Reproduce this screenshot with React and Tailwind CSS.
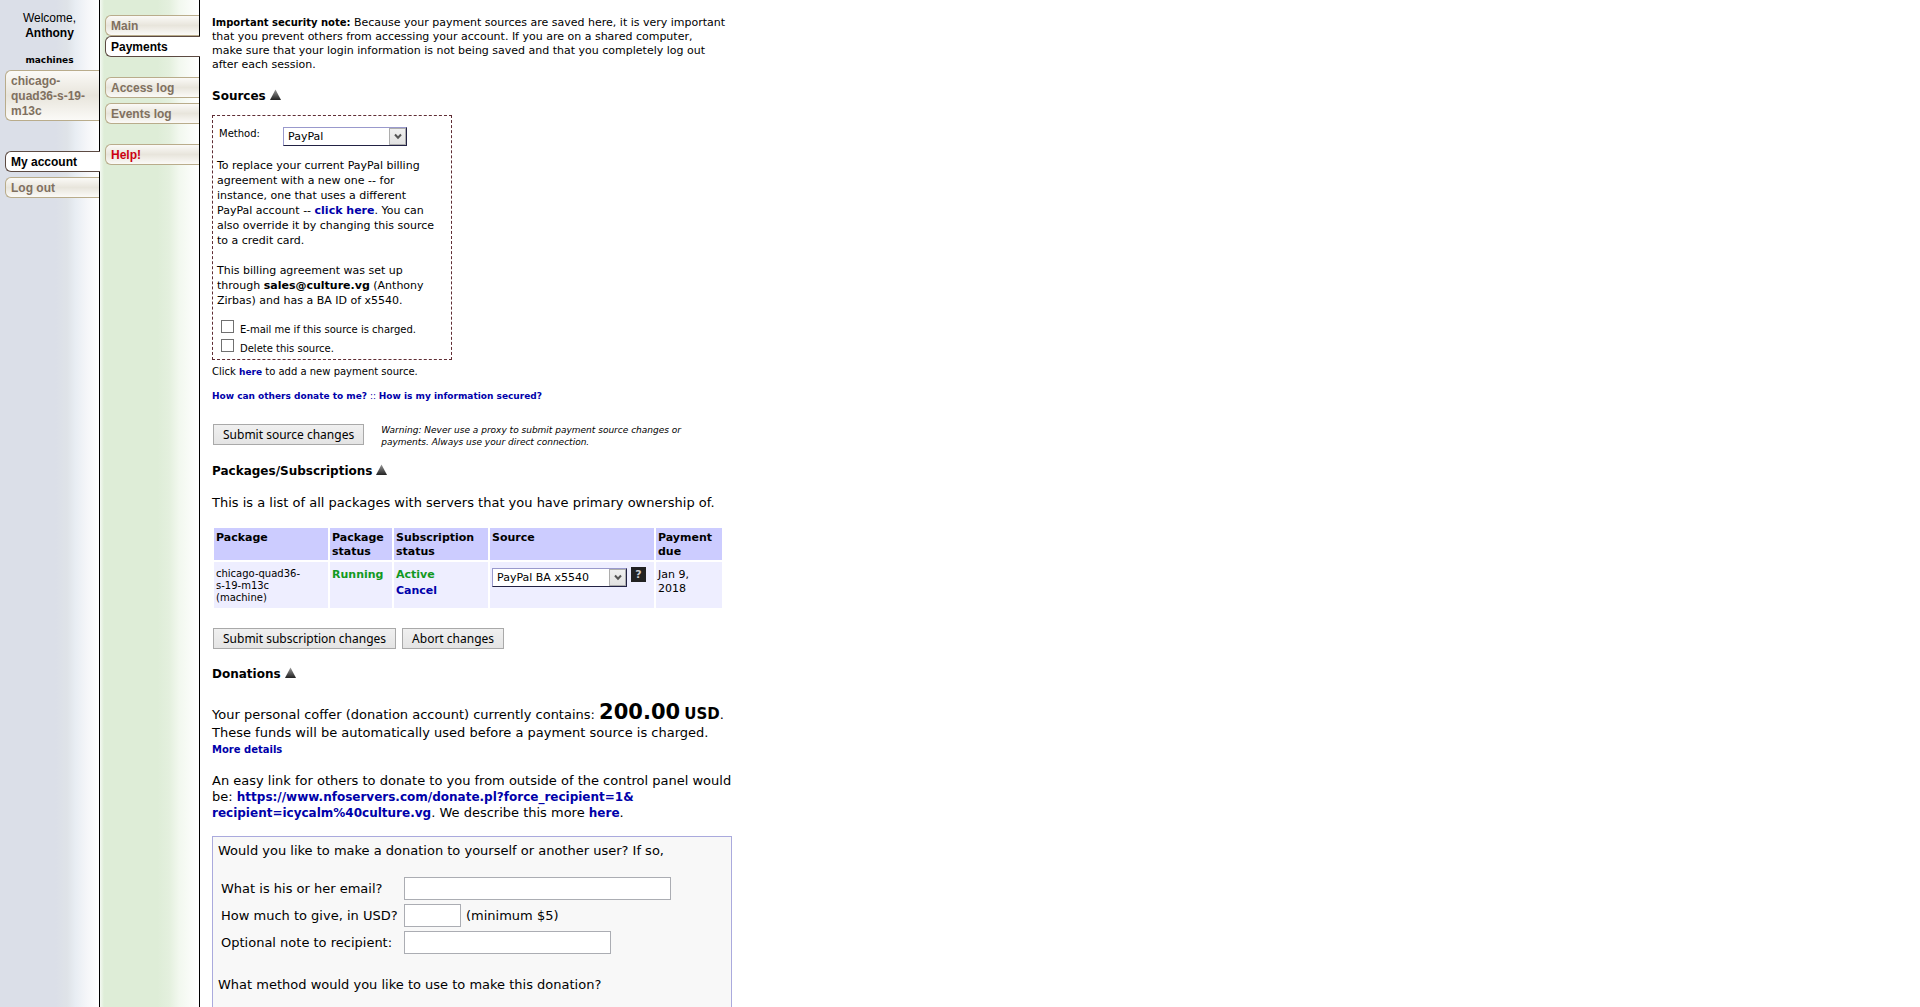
const link = "text-[12px] font-bold text-[#0000aa]";
const linkSmall = "text-[9px] font-bold text-[#0000aa]";

function Tab({ children, active, danger, className = "" }) {
  const tone = active
    ? "relative z-10 -mr-px border-[#5c4a42] bg-white text-black"
    : danger
      ? "border-[#b9ac8b] bg-linear-to-b from-[#fbfaf7] via-[#e8e5dc] to-[#fbfaf7] text-[#cc0011]"
      : "border-[#b9ac8b] bg-linear-to-b from-[#fbfaf7] via-[#e8e5dc] to-[#fbfaf7] text-[#80705f]";
  return (
    <a
      href="#"
      className={`block rounded-l-[6px] border border-r-0 pt-[3px] pb-px pl-[5px] font-['Liberation_Sans',sans-serif] text-[12px] leading-[15px] font-bold ${tone} ${className}`}
    >
      {children}
    </a>
  );
}

function Heading({ children }) {
  return (
    <h2 className="flex items-center gap-[4px] text-[12px] leading-[16px] font-bold">
      {children}
      <svg width="11" height="11" viewBox="0 0 11 11" className="mb-[4px]" aria-hidden="true">
        <defs>
          <linearGradient id="tri" x1="0" y1="0" x2="0" y2="1">
            <stop offset="0" stopColor="#999" />
            <stop offset="1" stopColor="#222" />
          </linearGradient>
        </defs>
        <path d="M5.5 0.5 L11 11 H0 Z" fill="url(#tri)" />
      </svg>
    </h2>
  );
}

function Select({ id, label, value, className }) {
  return (
    <span className={`relative inline-block ${className}`}>
      <select
        id={id}
        aria-label={label}
        defaultValue={value}
        className="block h-[19px] w-full appearance-none border border-t-[#9999cc] border-r-[#222244] border-b-[#222244] border-l-[#9999cc] bg-white pt-px pl-[4px] text-[11px] leading-[16px]"
      >
        <option>{value}</option>
      </select>
      <span className="pointer-events-none absolute top-px right-px flex h-[17px] w-[17px] items-center justify-center border border-[#adadad] bg-linear-to-b from-[#f0f0f0] to-[#e2e2e2]">
        <svg width="8" height="7" viewBox="0 0 8 7" aria-hidden="true">
          <path d="M1 1.5 L4 4.7 L7 1.5" fill="none" stroke="#555" strokeWidth="2" />
        </svg>
      </span>
    </span>
  );
}

function Button({ children }) {
  return (
    <button
      type="button"
      className="h-[21px] border border-[#a9a9a9] bg-linear-to-b from-[#f0f0f0] to-[#e4e4e4] px-[9px] font-['Noto_Sans',sans-serif] text-[12px] leading-[19px] whitespace-nowrap"
    >
      {children}
    </button>
  );
}

function Check({ id, children }) {
  return (
    <div className="flex h-[19px] items-start gap-[6px]">
      <input id={id} type="checkbox" className="h-[13px] w-[13px] appearance-none border border-[#707070] bg-white" />
      <label htmlFor={id} className="pt-[3px] text-[10px] leading-[13px]">
        {children}
      </label>
    </div>
  );
}

const field = "h-[23px] border border-[#abadb3] bg-white px-[3px] text-[13px]";

export default function App() {
  return (
    <div className="flex min-h-screen bg-white font-['DejaVu_Sans',sans-serif] text-[13px] leading-[16px] text-black">
      <aside className="w-[100px] shrink-0 border-r border-black bg-[linear-gradient(to_right,#dbdfe8_56%,#dfe3e8_68%,#e8edf3_76%,#f5f6f9_88%,#ffffff)] pt-[11px]">
        <div className="text-center font-['Liberation_Sans',sans-serif] text-[12px] leading-[15px]">
          Welcome,
          <br />
          <b>Anthony</b>
        </div>
        <div className="mt-[13px] text-center text-[9px] leading-[13px] font-bold">machines</div>
        <nav className="mt-[3px] pl-[5px]">
          <Tab>
            chicago-
            <br />
            quad36-s-19-
            <br />
            m13c
          </Tab>
          <Tab active className="mt-[30px]">My account</Tab>
          <Tab className="mt-[5px]">Log out</Tab>
        </nav>
      </aside>

      <nav className="w-[100px] shrink-0 border-r border-black bg-[linear-gradient(to_right,#f4f9f2,#deedd7_4%,#deedd7_58%,#e4f0de_70%,#f2f8ef_80%,#ffffff)] pt-[15px] pl-[5px]">
        <Tab>Main</Tab>
        <Tab active>Payments</Tab>
        <Tab className="mt-[20px]">Access log</Tab>
        <Tab className="mt-[5px]">Events log</Tab>
        <Tab danger className="mt-[20px]">Help!</Tab>
      </nav>

      <main className="flex w-[532px] flex-col pt-[16px] pl-[12px]">
        <p className="text-[11px] leading-[14px] whitespace-nowrap">
          <b className="text-[10px]">Important security note:</b> Because your payment sources are saved here, it is very important
          <br />
          that you prevent others from accessing your account. If you are on a shared computer,
          <br />
          make sure that your login information is not being saved and that you completely log out
          <br />
          after each session.
        </p>

        <div className="mt-[16px]">
          <Heading>Sources</Heading>
        </div>

        <section className="mt-[11px] h-[245px] w-[240px] border border-dashed border-[#5f2c33] px-[4px] whitespace-nowrap">
          <div className="flex items-start pt-[11px] pl-[2px]">
            <label htmlFor="method" className="w-[64px] text-[10px] leading-[13px]">Method:</label>
            <Select id="method" label="Method" value="PayPal" className="w-[124px]" />
          </div>
          <p className="mt-[12px] text-[11px] leading-[15px]">
            To replace your current PayPal billing
            <br />
            agreement with a new one -- for
            <br />
            instance, one that uses a different
            <br />
            PayPal account -- <a href="#" className="font-bold text-[#0000aa]">click here</a>. You can
            <br />
            also override it by changing this source
            <br />
            to a credit card.
          </p>
          <p className="mt-[15px] text-[11px] leading-[15px]">
            This billing agreement was set up
            <br />
            through <b>sales@culture.vg</b> (Anthony
            <br />
            Zirbas) and has a BA ID of x5540.
          </p>
          <div className="mt-[12px] pl-[4px]">
            <Check id="email-me">E-mail me if this source is charged.</Check>
            <Check id="delete">Delete this source.</Check>
          </div>
        </section>

        <p className="mt-[5px] text-[10px] leading-[13px]">
          Click <a href="#" className={linkSmall}>here</a> to add a new payment source.
        </p>
        <p className="mt-[11px] text-[9px] leading-[13px] text-[#0000aa]">
          <a href="#" className={linkSmall}>How can others donate to me?</a> ::{" "}
          <a href="#" className={linkSmall}>How is my information secured?</a>
        </p>

        <div className="mt-[21px] flex items-start gap-[17px] pl-[1px]">
          <Button>Submit source changes</Button>
          <p className="text-[9px] leading-[12px] whitespace-nowrap italic">
            Warning: Never use a proxy to submit payment source changes or
            <br />
            payments. Always use your direct connection.
          </p>
        </div>

        <div className="mt-[15px]">
          <Heading>Packages/Subscriptions</Heading>
        </div>
        <p className="mt-[16px] whitespace-nowrap">
          This is a list of all packages with servers that you have primary ownership of.
        </p>

        <table className="mt-[15px] w-[512px] table-fixed border-separate border-spacing-[2px] text-left text-[11px] leading-[14px]">
          <colgroup>
            <col className="w-[114px]" />
            <col className="w-[62px]" />
            <col className="w-[94px]" />
            <col className="w-[164px]" />
            <col />
          </colgroup>
          <thead>
            <tr className="h-[32px] bg-[#ccccff] align-top">
              <th className="px-[2px] pt-[3px]">Package</th>
              <th className="px-[2px] pt-[3px]">Package status</th>
              <th className="px-[2px] pt-[3px]">Subscription status</th>
              <th className="px-[2px] pt-[3px]">Source</th>
              <th className="px-[2px] pt-[3px]">Payment due</th>
            </tr>
          </thead>
          <tbody>
            <tr className="h-[46px] bg-[#eeeeff] align-top">
              <td className="px-[2px] pt-[6px] text-[10px] leading-[12px]">
                chicago-quad36-
                <br />
                s-19-m13c
                <br />
                (machine)
              </td>
              <td className="px-[2px] pt-[5px] leading-[16px] font-bold text-[#119922]">Running</td>
              <td className="px-[2px] pt-[5px] leading-[16px] font-bold text-[#119922]">
                Active
                <br />
                <a href="#" className="text-[#0000aa]">Cancel</a>
              </td>
              <td className="px-[2px] pt-[5px]">
                <div className="flex items-start gap-[4px]">
                  <Select id="source" label="Source" value="PayPal BA x5540" className="mt-px w-[135px]" />
                  <a href="#" className="flex h-[15px] w-[15px] items-center justify-center bg-[#222] text-[11px] font-bold text-[#ccc]">?</a>
                </div>
              </td>
              <td className="px-[2px] pt-[6px]">
                Jan 9,
                <br />
                2018
              </td>
            </tr>
          </tbody>
        </table>

        <div className="mt-[18px] flex gap-[6px] pl-[1px]">
          <Button>Submit subscription changes</Button>
          <Button>Abort changes</Button>
        </div>

        <div className="mt-[17px]">
          <Heading>Donations</Heading>
        </div>
        <p className="mt-[21px] leading-[18px] whitespace-nowrap">
          Your personal coffer (donation account) currently contains:{" "}
          <b className="text-[21px]">200.00</b> <b className="text-[15px]">USD</b>.
          <br />
          These funds will be automatically used before a payment source is charged.
        </p>
        <p className="text-[10px] leading-[16px]">
          <a href="#" className="font-bold text-[#0000aa]">More details</a>
        </p>
        <p className="mt-[15px] whitespace-nowrap">
          An easy link for others to donate to you from outside of the control panel would
          <br />
          be:{" "}
          <a href="#" className={link}>
            https://www.nfoservers.com/donate.pl?force_recipient=1&amp;
            <br />
            recipient=icycalm%40culture.vg
          </a>
          . We describe this more <a href="#" className={link}>here</a>.
        </p>

        <form className="mt-[15px] flex-1 border border-b-0 border-[#aaaadd] bg-[#f8f8f8] px-[5px] pt-[6px] whitespace-nowrap">
          <p>Would you like to make a donation to yourself or another user? If so,</p>
          <div className="mt-[18px] grid grid-cols-[183px_1fr] items-center gap-y-[4px] pl-[3px]">
            <label htmlFor="email">What is his or her email?</label>
            <input id="email" type="text" className={`${field} w-[267px]`} />
            <label htmlFor="amount">How much to give, in USD?</label>
            <div className="flex items-center gap-[5px]">
              <input id="amount" type="text" className={`${field} w-[57px]`} />
              (minimum $5)
            </div>
            <label htmlFor="note">Optional note to recipient:</label>
            <input id="note" type="text" className={`${field} w-[207px]`} />
          </div>
          <p className="mt-[23px]">What method would you like to use to make this donation?</p>
        </form>
      </main>
    </div>
  );
}
